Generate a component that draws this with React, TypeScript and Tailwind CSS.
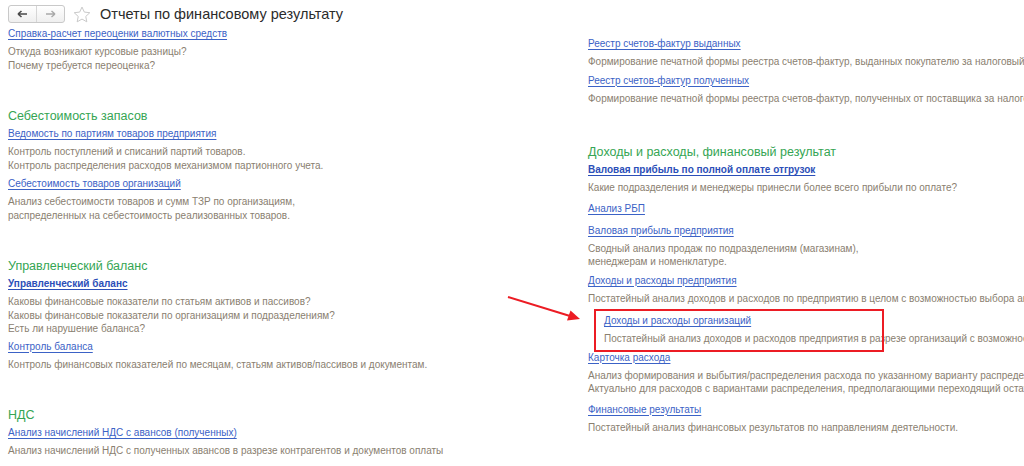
import React from 'react';

type Item = { title: string; lines?: string[]; bold?: boolean; gap?: string };

const Link: React.FC<{ text: string; bold?: boolean }> = ({ text, bold }) => (
  <div className="h-[14px] leading-[14px] text-[10px] whitespace-nowrap">
    <span className={`underline underline-offset-[2px] ${bold ? 'font-bold text-[#2c4fb8]' : 'text-[#3b62c6]'}`}>{text}</span>
  </div>
);

const Desc: React.FC<{ lines: string[] }> = ({ lines }) => (
  <div className="mt-[4px] text-[10px] leading-[13.5px] text-[#8a8070] whitespace-nowrap">
    {lines.map((l) => (
      <div key={l}>{l}</div>
    ))}
  </div>
);

const Entry: React.FC<{ item: Item }> = ({ item }) => (
  <div className={item.gap ?? 'mt-[5px]'}>
    <Link text={item.title} bold={item.bold} />
    {item.lines && <Desc lines={item.lines} />}
  </div>
);

const Section: React.FC<{ title: string; items: Item[]; gap?: string }> = ({ title, items, gap }) => (
  <div className={gap ?? 'mt-[35px]'}>
    <div className="h-[18px] leading-[18px] text-[12.5px] text-[#35a553]">{title}</div>
    {items.map((it, i) => (
      <Entry key={it.title} item={{ ...it, gap: it.gap ?? (i === 0 ? 'mt-[2px]' : undefined) }} />
    ))}
  </div>
);

const NavButtons = () => (
  <div className="flex h-[18px] w-[57px] rounded-[3px] border border-[#c9c9c9] bg-gradient-to-b from-white to-[#efefef]">
    <div className="flex w-[28px] items-center justify-center border-r border-[#d6d6d6]">
      <svg width="11" height="8" viewBox="0 0 11 8">
        <path d="M1 4h9M1 4l3.5-3M1 4l3.5 3" stroke="#4a4a4a" strokeWidth="1.6" fill="none" />
      </svg>
    </div>
    <div className="flex flex-1 items-center justify-center">
      <svg width="11" height="8" viewBox="0 0 11 8">
        <path d="M1 4h9M10 4L6.5 1M10 4L6.5 7" stroke="#a9a9a9" strokeWidth="1.4" fill="none" />
      </svg>
    </div>
  </div>
);

const Star = () => (
  <svg width="18" height="17" viewBox="0 0 20 19">
    <path
      d="M10 1.2l2.6 5.6 6.1.7-4.5 4.2 1.2 6-5.4-3.1-5.4 3.1 1.2-6L1.3 7.5l6.1-.7z"
      fill="none"
      stroke="#c8c8c8"
      strokeWidth="1.1"
      strokeLinejoin="round"
    />
  </svg>
);

export default function App() {
  return (
    <div className="relative h-[466px] w-[1024px] overflow-hidden bg-white font-['Liberation_Sans',Arial,sans-serif]">
      <div className="flex h-[27px] items-center pl-[8px] pt-[1px]">
        <NavButtons />
        <div className="ml-[8px] flex">
          <Star />
        </div>
        <div className="ml-[9px] text-[14.5px] leading-[20px] text-[#2b2b2b]">Отчеты по финансовому результату</div>
      </div>

      <div className="flex">
        <div className="w-[588px] shrink-0 pl-[8px]">
          <Entry
            item={{
              title: 'Справка-расчет переоценки валютных средств',
              lines: ['Откуда возникают курсовые разницы?', 'Почему требуется переоценка?'],
              gap: 'mt-0',
            }}
          />
          <Section
            title="Себестоимость запасов"
            items={[
              {
                title: 'Ведомость по партиям товаров предприятия',
                lines: ['Контроль поступлений и списаний партий товаров.', 'Контроль распределения расходов механизмом партионного учета.'],
              },
              {
                title: 'Себестоимость товаров организаций',
                lines: ['Анализ себестоимости товаров и сумм ТЗР по организациям,', 'распределенных на себестоимость реализованных товаров.'],
              },
            ]}
          />
          <Section
            title="Управленческий баланс"
            items={[
              {
                title: 'Управленческий баланс',
                bold: true,
                lines: [
                  'Каковы финансовые показатели по статьям активов и пассивов?',
                  'Каковы финансовые показатели по организациям и подразделениям?',
                  'Есть ли нарушение баланса?',
                ],
              },
              {
                title: 'Контроль баланса',
                gap: 'mt-[4px]',
                lines: ['Контроль финансовых показателей по месяцам, статьям активов/пассивов и документам.'],
              },
            ]}
          />
          <Section
            title="НДС"
            items={[
              {
                title: 'Анализ начислений НДС с авансов (полученных)',
                lines: ['Анализ начислений НДС с полученных авансов в разрезе контрагентов и документов оплаты'],
              },
            ]}
          />
        </div>

        <div className="min-w-0 flex-1 pt-[10px]">
          <Entry
            item={{
              title: 'Реестр счетов-фактур выданных',
              lines: ['Формирование печатной формы реестра счетов-фактур, выданных покупателю за налоговый период'],
              gap: 'mt-0',
            }}
          />
          <Entry
            item={{
              title: 'Реестр счетов-фактур полученных',
              lines: ['Формирование печатной формы реестра счетов-фактур, полученных от поставщика за налоговый период'],
            }}
          />
          <Section
            title="Доходы и расходы, финансовый результат"
            gap="mt-[38px]"
            items={[
              {
                title: 'Валовая прибыль по полной оплате отгрузок',
                bold: true,
                lines: ['Какие подразделения и менеджеры принесли более всего прибыли по оплате?'],
              },
              { title: 'Анализ РБП', gap: 'mt-[7px]' },
              {
                title: 'Валовая прибыль предприятия',
                gap: 'mt-[8px]',
                lines: ['Сводный анализ продаж по подразделениям (магазинам),', 'менеджерам и номенклатуре.'],
              },
              {
                title: 'Доходы и расходы предприятия',
                lines: ['Постатейный анализ доходов и расходов по предприятию в целом с возможностью выбора аналитики'],
              },
            ]}
          />
          <div className="relative mt-[9px] pl-[16px]">
            <Link text="Доходы и расходы организаций" />
            <Desc lines={['Постатейный анализ доходов и расходов предприятия в разрезе организаций с возможностью выбора аналитики']} />
            <div className="absolute left-[6px] top-[-5px] h-[43px] w-[290px] border-2 border-[#ec1c24]" />
          </div>
          <Entry
            item={{
              title: 'Карточка расхода',
              lines: [
                'Анализ формирования и выбытия/распределения расхода по указанному варианту распределения',
                'Актуально для расходов с вариантами распределения, предполагающими переходящий остаток',
              ],
            }}
          />
          <Entry
            item={{
              title: 'Финансовые результаты',
              gap: 'mt-[7px]',
              lines: ['Постатейный анализ финансовых результатов по направлениям деятельности.'],
            }}
          />
        </div>
      </div>

      <svg className="pointer-events-none absolute left-0 top-0" width="1024" height="466">
        <line x1="508" y1="297" x2="570" y2="316" stroke="#ec1c24" strokeWidth="2" />
        <path d="M580 319 L567 320.5 L570.5 310.5 Z" fill="#ec1c24" />
      </svg>
    </div>
  );
}
